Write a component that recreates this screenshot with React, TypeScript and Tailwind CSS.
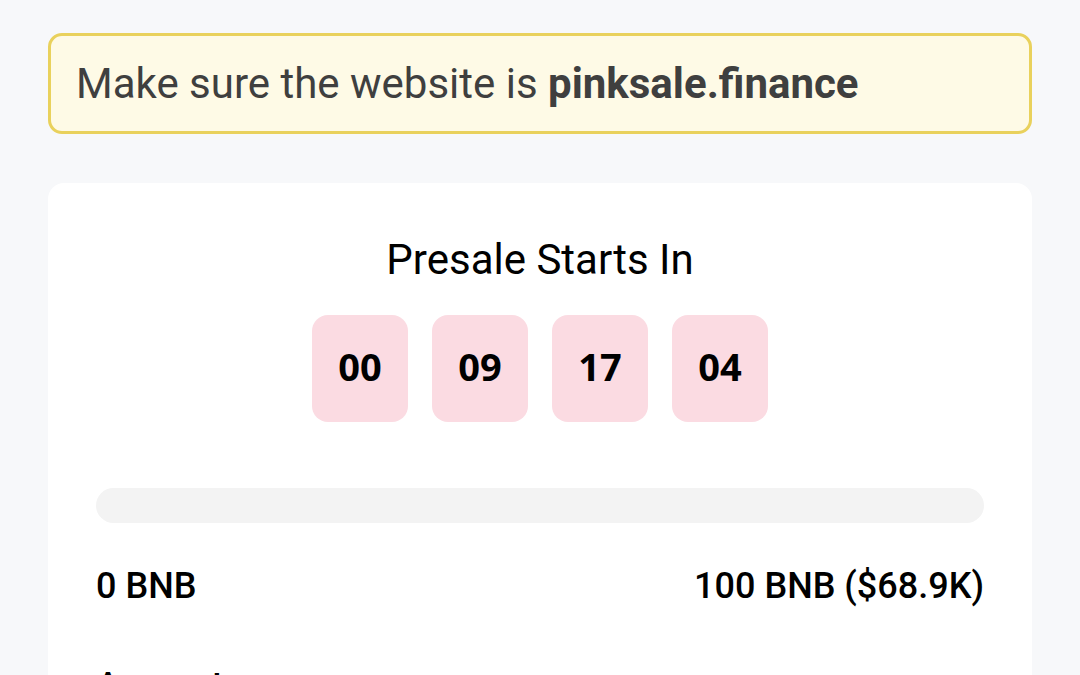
import { useState } from "react";

const units = ["00", "09", "17", "04"];

export default function App() {
  const [raised] = useState(0);
  const hardCap = 100;

  return (
    <div className="min-h-screen bg-[#f7f8fa] px-12 pt-[33px] font-['Roboto',sans-serif]">

      {/* warning banner */}
      <div className="rounded-[14px] border-[3px] border-[#e9d15c] bg-[#fefae6] px-[25px] py-[23px] text-[42px] leading-[49px] text-[#3f3f3f]">
        Make sure the website is <span className="font-bold">pinksale.finance</span>
      </div>

      <div className="mt-[49px] rounded-2xl bg-white px-12 pt-[50px] pb-10">

        <h2 className="text-center text-[42px] leading-[54px] font-normal text-black">
          Presale Starts In
        </h2>

        <div className="mt-[28px] flex justify-center gap-6">
          {units.map((u, i) => (
            <div
              key={i}
              className="flex h-[107px] w-24 items-center justify-center rounded-2xl bg-[#fbdbe2] pb-1 font-['Noto_Sans',sans-serif] text-[38px] font-bold text-black"
            >
              {u}
            </div>
          ))}
        </div>

        {/* progress */}
        <div className="mt-[66px] h-[35px] w-full overflow-hidden rounded-full bg-[#f3f3f3]">
          <div className="h-full bg-pink-500" style={{ width: `${(raised / hardCap) * 100}%` }} />
        </div>

        <div className="mt-[41px] flex justify-between text-[36px] leading-[44px] font-medium text-black">
          <span>{raised} BNB</span>
          <span>{hardCap} BNB ($68.9K)</span>
        </div>

        <div className="mt-[56px] text-[36px] leading-[44px] font-medium text-black">
          Amount
        </div>
      </div>
    </div>
  );
}
